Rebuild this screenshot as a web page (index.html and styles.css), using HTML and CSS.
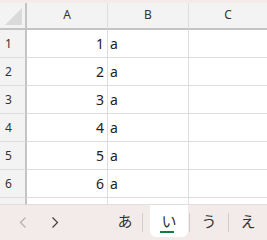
FILE: index.html
```html
<html>
<head>
  <meta charset="utf-8">
  <link rel="stylesheet" href="styles.css">
</head>
<body>
  <div class="topbar"></div>

  <div class="grid">
    <div class="corner"><div class="triangle"></div></div>
    <div class="col-head">A</div>
    <div class="col-head">B</div>
    <div class="col-head last">C</div>

    <div class="row-head">1</div><div class="cell num">1</div><div class="cell">a</div><div class="cell last"></div>
    <div class="row-head">2</div><div class="cell num">2</div><div class="cell">a</div><div class="cell last"></div>
    <div class="row-head">3</div><div class="cell num">3</div><div class="cell">a</div><div class="cell last"></div>
    <div class="row-head">4</div><div class="cell num">4</div><div class="cell">a</div><div class="cell last"></div>
    <div class="row-head">5</div><div class="cell num">5</div><div class="cell">a</div><div class="cell last"></div>
    <div class="row-head">6</div><div class="cell num">6</div><div class="cell">a</div><div class="cell last"></div>
    <div class="row-head"></div><div class="cell"></div><div class="cell"></div><div class="cell last"></div>
  </div>

  <div class="tabbar">
    <div class="nav">
      <svg width="8" height="11" viewBox="0 0 8 11"><polyline points="6.5,0.5 1.5,5.5 6.5,10.5" fill="none" stroke="#b4b0b0" stroke-width="1.2"/></svg>
    </div>
    <div class="nav">
      <svg width="8" height="11" viewBox="0 0 8 11"><polyline points="1.5,0.5 6.5,5.5 1.5,10.5" fill="none" stroke="#404040" stroke-width="1.2"/></svg>
    </div>
    <div class="sheets">
      <div class="tab">あ</div>
      <div class="sep"></div>
      <div class="tab active">い<span class="underline"></span></div>
      <div class="sep tight"></div>
      <div class="tab">う</div>
      <div class="sep"></div>
      <div class="tab">え</div>
    </div>
  </div>
</body>
</html>
```

FILE: styles.css
```css
body {
  margin: 0;
  width: 267px;
  height: 240px;
  overflow: hidden;
  background-color: #ffffff;
  font-family: 'Noto Sans', 'Noto Sans CJK JP', sans-serif;
  color: #222222;
}

.topbar {
  height: 3px;
  background-color: #f4eceb;
}

.grid {
  display: grid;
  grid-template-columns: 27px 81px 81px 1fr;
  grid-template-rows: 27px repeat(6, 28px) 7px;
  overflow: hidden;
}

.corner, .col-head, .row-head {
  background-color: #f3f3f3;
  box-sizing: border-box;
}

.corner {
  border-right: 2px solid #c4c4c4;
  border-bottom: 2px solid #c4c4c4;
}
.triangle {
  width: 0;
  height: 0;
  margin: 5px 0 0 5px;
  border-left: 17px solid transparent;
  border-bottom: 17px solid #dadada;
}

.col-head {
  border-right: 1px solid #dedede;
  border-bottom: 2px solid #c4c4c4;
  text-align: center;
  font-size: 12px;
  line-height: 23px;
  color: #333333;
}

.row-head {
  border-right: 2px solid #c4c4c4;
  border-bottom: 1px solid #dedede;
  font-size: 12px;
  line-height: 27px;
  padding-left: 5px;
  color: #333333;
}

.cell {
  box-sizing: border-box;
  border-right: 1px solid #dedede;
  border-bottom: 1px solid #dedede;
  font-size: 14px;
  line-height: 27px;
  padding-left: 2px;
}
.cell.num {
  text-align: right;
  padding-right: 3px;
}
.last {
  border-right: none;
}

.tabbar {
  height: 35px;
  background-color: #f2ebea;
  display: flex;
  align-items: flex-start;
  padding-left: 7px;
}

.nav {
  width: 37px;
  height: 35px;
  display: flex;
  align-items: center;
  justify-content: center;
}

.sheets {
  display: flex;
  align-items: flex-start;
  margin-left: 37px;
}

.tab {
  width: 34px;
  height: 32px;
  text-align: center;
  font-family: 'Noto Sans CJK JP', sans-serif;
  font-size: 15px;
  line-height: 31px;
  color: #333333;
  flex-shrink: 0;
}
.tab.active {
  width: 35px;
  margin-left: 7px;
  background-color: #ffffff;
  border-radius: 0 0 6px 6px;
  position: relative;
}
.underline {
  position: absolute;
  left: 10px;
  bottom: 4px;
  width: 14px;
  height: 2px;
  background-color: #107c41;
}

.sep {
  width: 1px;
  height: 19px;
  margin-top: 8px;
  background-color: #d2cccb;
  flex-shrink: 0;
}
.sep.tight {
  margin-left: 1px;
}
.tab + .sep + .tab {
  width: 38px;
}
```
